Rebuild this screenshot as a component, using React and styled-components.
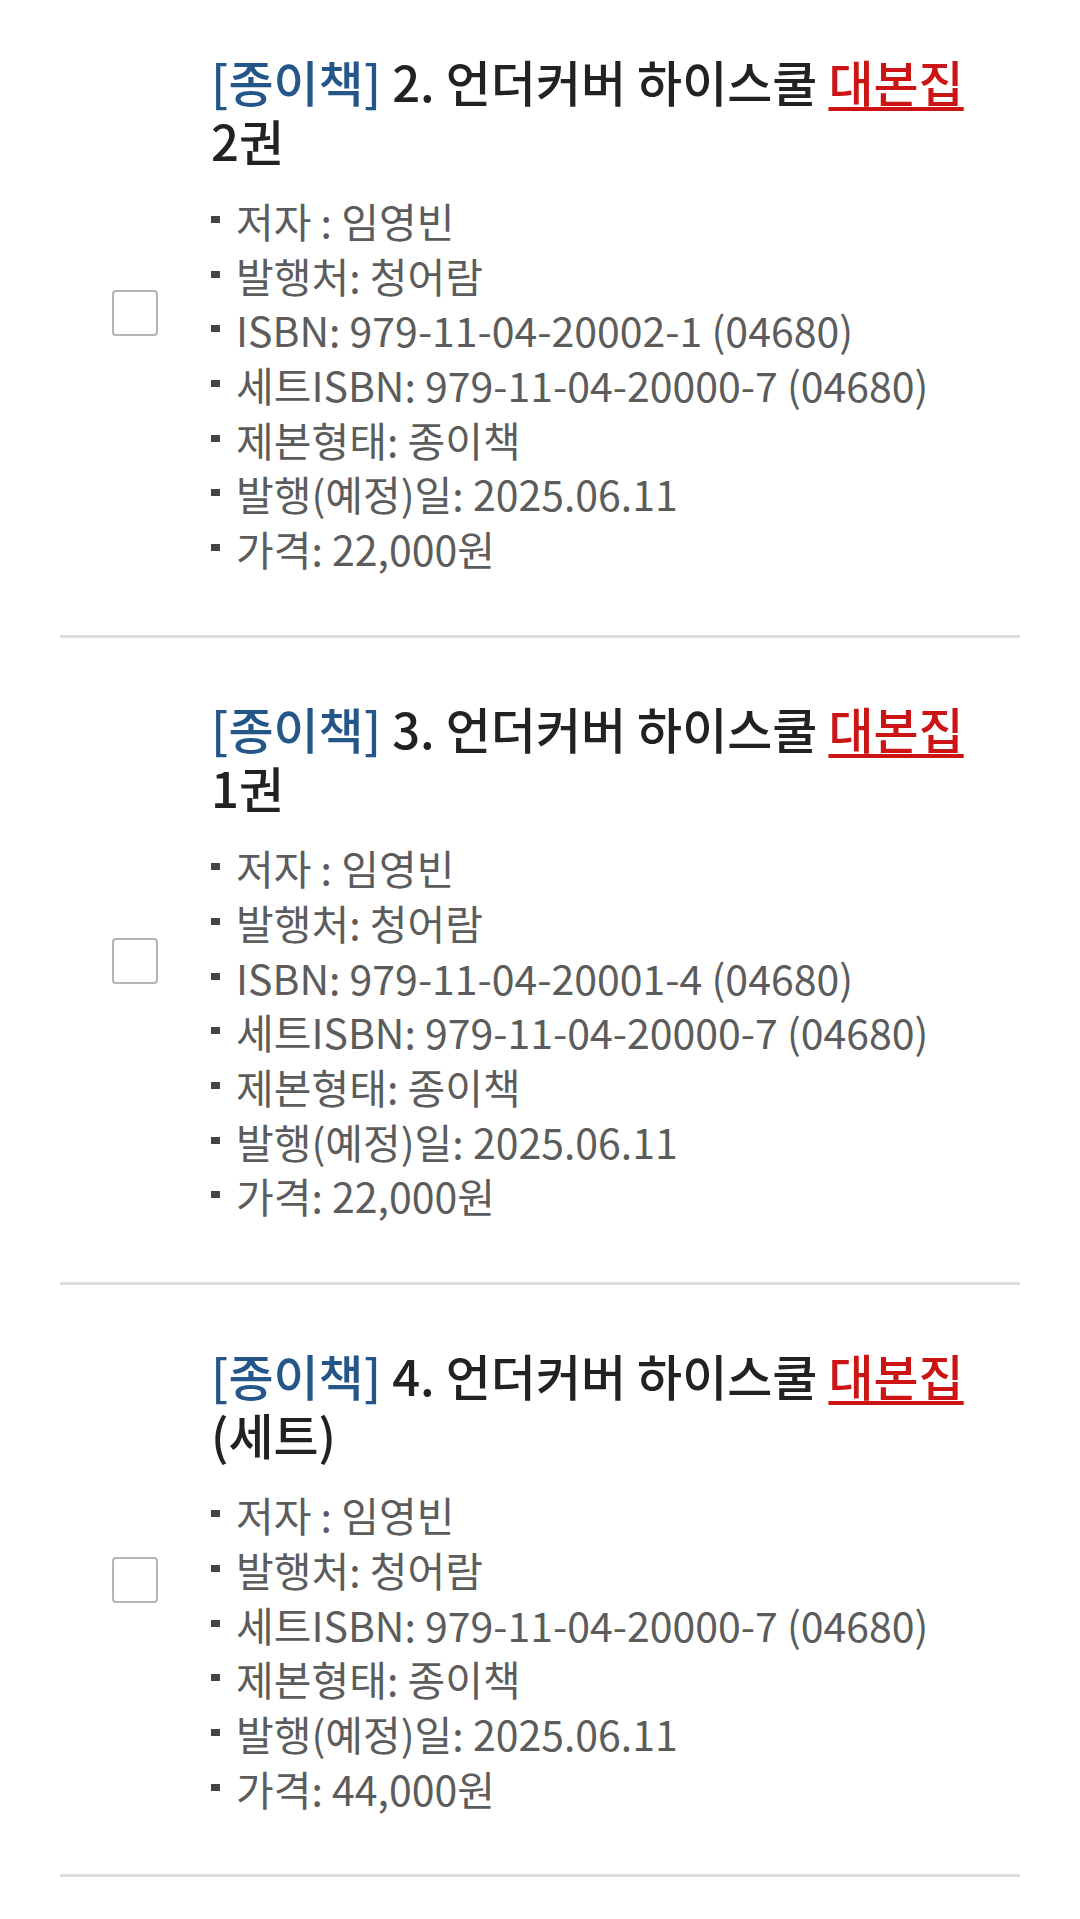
import React from "react";
import styled, { createGlobalStyle } from "styled-components";

const BOOKS = [
  {
    no: 2,
    volume: "2권",
    rows: [
      "저자 : 임영빈",
      "발행처: 청어람",
      "ISBN: 979-11-04-20002-1 (04680)",
      "세트ISBN: 979-11-04-20000-7 (04680)",
      "제본형태: 종이책",
      "발행(예정)일: 2025.06.11",
      "가격: 22,000원",
    ],
  },
  {
    no: 3,
    volume: "1권",
    rows: [
      "저자 : 임영빈",
      "발행처: 청어람",
      "ISBN: 979-11-04-20001-4 (04680)",
      "세트ISBN: 979-11-04-20000-7 (04680)",
      "제본형태: 종이책",
      "발행(예정)일: 2025.06.11",
      "가격: 22,000원",
    ],
  },
  {
    no: 4,
    volume: "(세트)",
    rows: [
      "저자 : 임영빈",
      "발행처: 청어람",
      "세트ISBN: 979-11-04-20000-7 (04680)",
      "제본형태: 종이책",
      "발행(예정)일: 2025.06.11",
      "가격: 44,000원",
    ],
  },
];

const GlobalStyle = createGlobalStyle`
  html, body {
    margin: 0;
    padding: 0;
    background: #fff;
  }
  body {
    font-family: "Noto Sans CJK KR", "Noto Sans", sans-serif;
    overflow: hidden;
  }
`;

function App() {
  return (
    <>
      <GlobalStyle />
      <List>
        {BOOKS.map((book) => (
          <Item key={book.no}>
            <Check type="checkbox" aria-label={`${book.no}번 선택`} />
            <Body>
              <Title>
                <Tag>[종이책]</Tag> {book.no}. 언더커버 하이스쿨{" "}
                <Mark>대본집</Mark> {book.volume}
              </Title>
              <Info>
                {book.rows.map((row) => (
                  <Row key={row}>{row}</Row>
                ))}
              </Info>
            </Body>
          </Item>
        ))}
      </List>
    </>
  );
}

const List = styled.ul`
  list-style: none;
  margin: -9.5px 60px 0; /* page is scrolled a bit */
  padding: 0;
`;

const Item = styled.li`
  display: flex;
  align-items: center;
  padding: 60.5px 20px 59px 52px;
  border-bottom: 3px solid #dddddd;
`;

const Check = styled.input`
  appearance: none;
  flex: none;
  width: 46px;
  height: 46px;
  margin: 0 53px 0 0;
  border: 2px solid #b4b4b4;
  border-radius: 4px;
  background: #fff;
`;

const Body = styled.div`
  flex: 1;
  min-width: 0;
`;

const Title = styled.p`
  margin: 0 0 24px;
  font-size: 49px;
  font-weight: 500;
  line-height: 59px;
  color: #222222;
  word-break: keep-all;
`;

const Tag = styled.span`
  color: #24568a;
`;

const Mark = styled.span`
  color: #cc1414;
  text-decoration: underline;
  text-decoration-thickness: 4px;
  text-underline-offset: 5px;
`;

const Info = styled.ul`
  list-style: none;
  margin: 0;
  padding: 0;
`;

const Row = styled.li`
  font-size: 41px;
  line-height: 54.67px;
  color: #5c5c5c;
  white-space: nowrap;

  &::before {
    content: "";
    display: inline-block;
    width: 9px;
    height: 7px;
    margin-right: 16px;
    background: #444444;
    vertical-align: 15px;
  }
`;

export default App;
